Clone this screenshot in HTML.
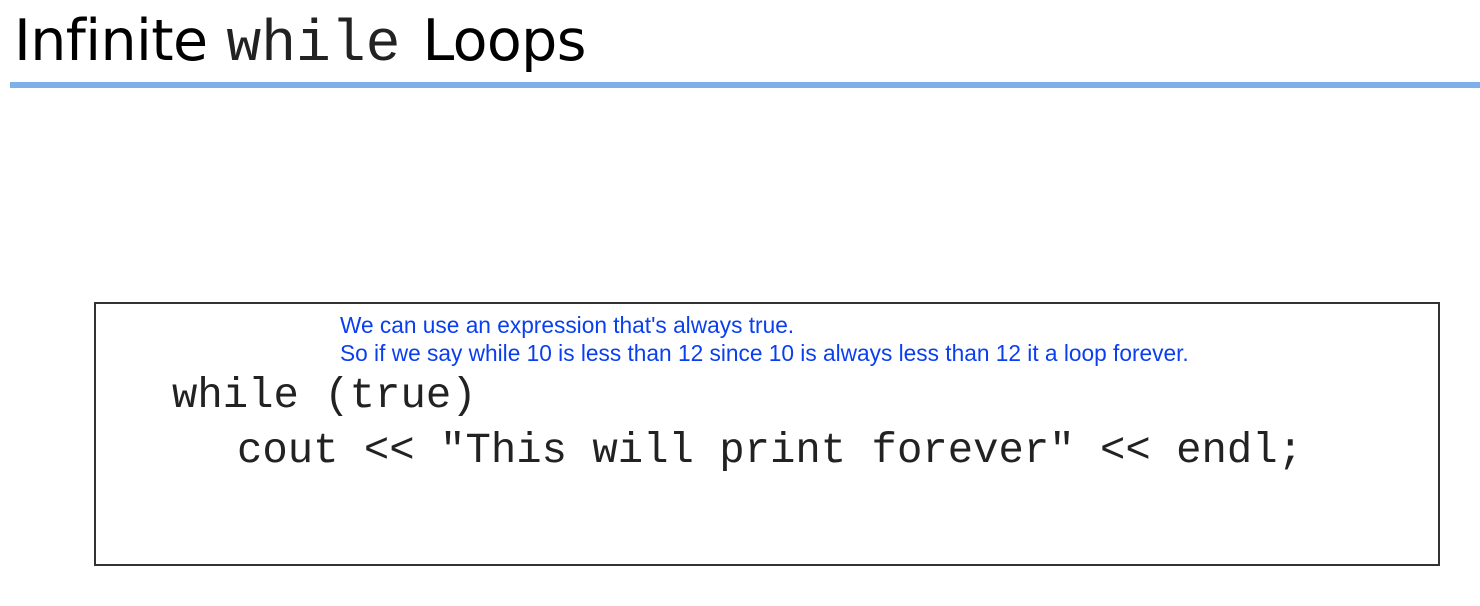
<!DOCTYPE html>
<html><head><meta charset="utf-8"><style>
body{margin:0;width:1480px;height:606px;background:#fff;position:relative;overflow:hidden}
.t{position:absolute;left:14px;top:8px;font-family:"DejaVu Sans","Liberation Sans",sans-serif;font-size:57px;color:#000;white-space:nowrap;letter-spacing:-0.6px}
.t .m{font-family:"Liberation Mono",monospace;font-size:58px;color:#222;letter-spacing:0;margin-left:19px;margin-right:22px}
.bar{position:absolute;left:10px;top:82px;width:1470px;height:6px;background:#7eb1ea}
.box{position:absolute;left:94px;top:302px;width:1342px;height:260px;border:2px solid #333}
.n{position:absolute;left:340px;font-family:"Liberation Sans",sans-serif;font-size:22.7px;color:#0a3ff0;white-space:nowrap}
.c{position:absolute;font-family:"Liberation Mono",monospace;font-size:42.3px;color:#222;white-space:pre}
</style></head><body>
<div class="t">Infinite<span class="m">while</span>Loops</div>
<div class="bar"></div>
<div class="box"></div>
<div class="n" style="top:312px">We can use an expression that's always true.</div>
<div class="n" style="top:340px">So if we say while 10 is less than 12 since 10 is always less than 12 it a loop forever.</div>
<div class="c" style="left:172px;top:372px">while (true)</div>
<div class="c" style="left:237px;top:427px">cout &lt;&lt; "This will print forever" &lt;&lt; endl;</div>
</body></html>
